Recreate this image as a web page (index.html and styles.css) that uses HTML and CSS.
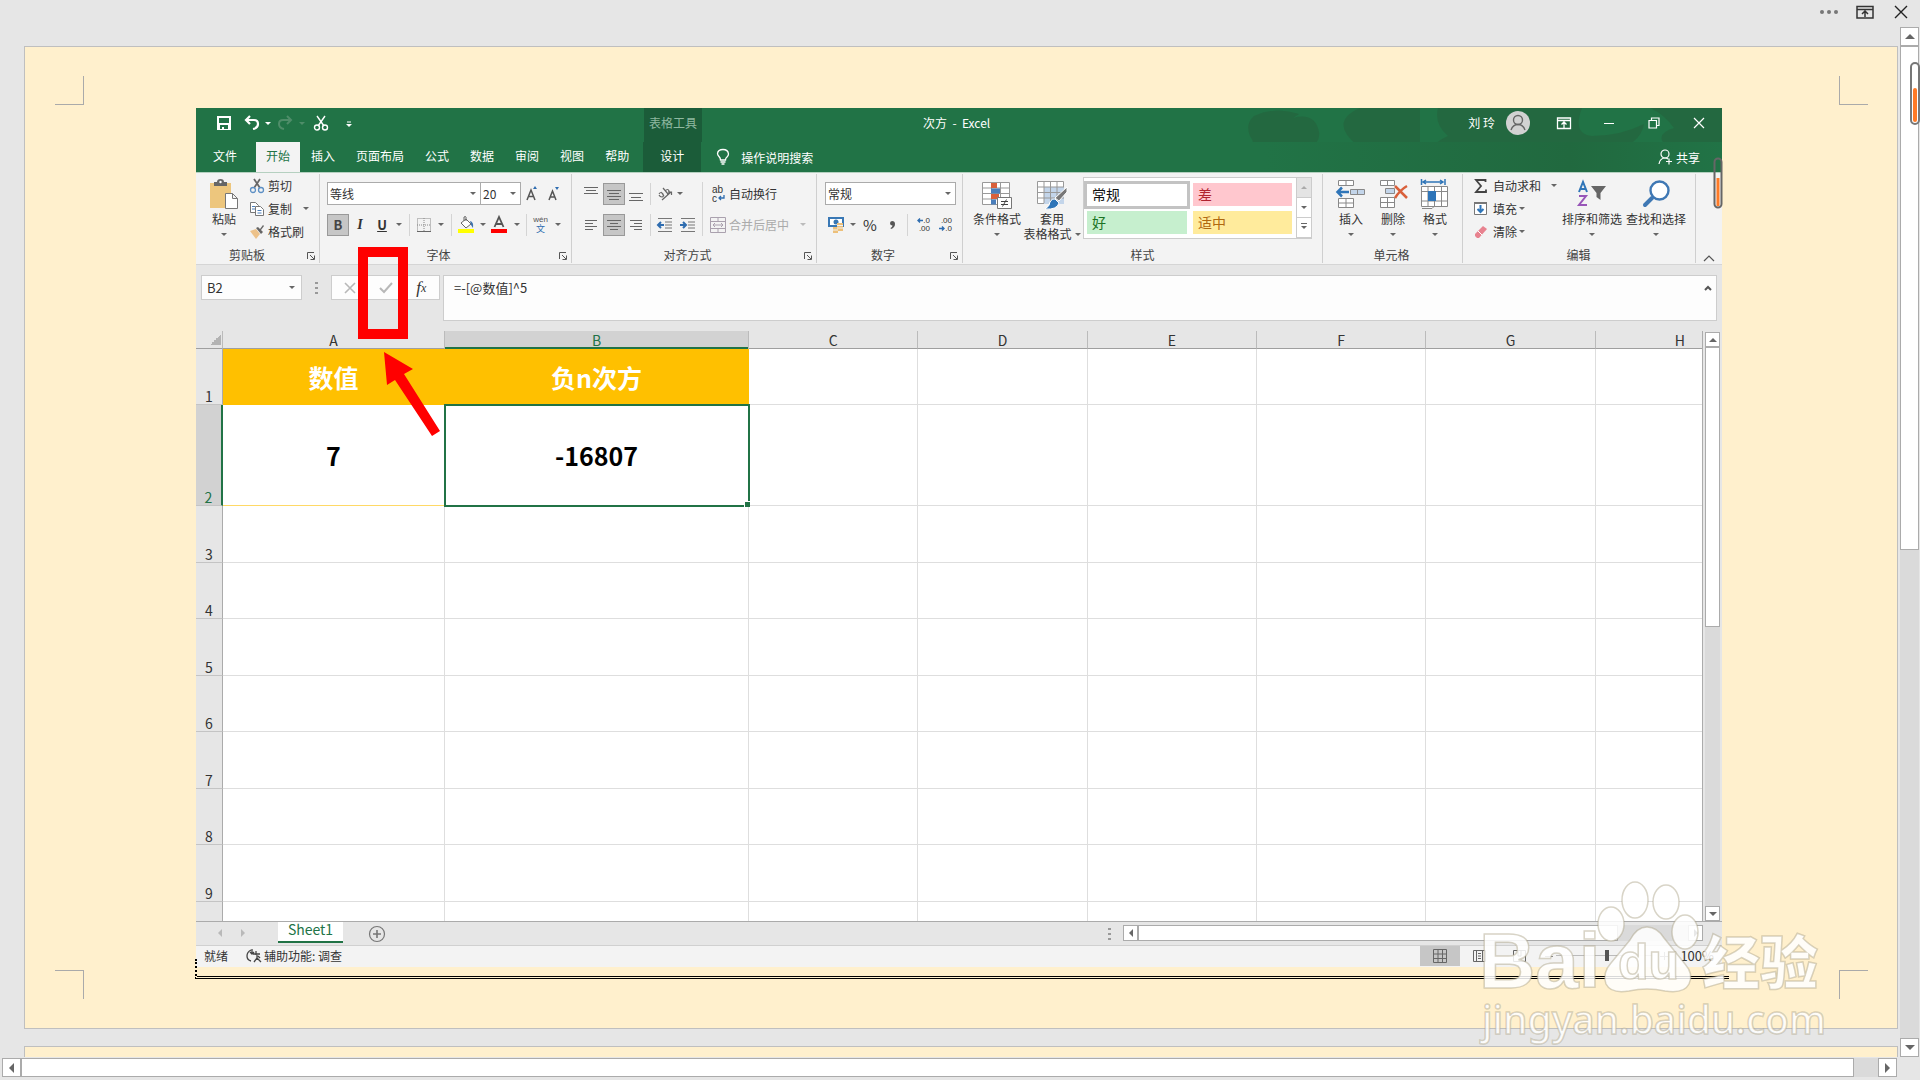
FILE: index.html
```html
<!DOCTYPE html>
<html lang="zh-CN">
<head>
<meta charset="utf-8">
<title>次方 - Excel</title>
<link rel="stylesheet" href="styles.css">
</head>
<body>
<div class="viewer">
  <header class="viewer-bar">
    <button aria-label="更多"><svg width="20" height="20"><g fill="#777"><circle cx="3" cy="10" r="2"/><circle cx="10" cy="10" r="2"/><circle cx="17" cy="10" r="2"/></g></svg></button>
    <button aria-label="功能区显示选项"><svg width="20" height="20" fill="none" stroke="#333" stroke-width="1.5"><path d="M2 4.500h16v11.500H2zM2 7.500h16M10 15V9M7 12l3-3 3 3"/></svg></button>
    <button aria-label="关闭"><svg width="20" height="20" fill="none" stroke="#222" stroke-width="1.4"><path d="M4 4l12 12M16 4L4 16"/></svg></button>
  </header>
  <main class="viewport">
    <section class="sheet-page">
      <span class="crop tl"></span><span class="crop tr"></span><span class="crop bl"></span><span class="crop br"></span>
      <div class="excel">
        <div class="titlebar">
          <svg class="clouds" width="480" height="64" viewBox="0 0 480 64" fill="#24653f" fill-opacity=".8"><path d="M12 8Q34-2 57 6l-6 4q22-6 26 14 2 14-18 17 24 1 36-5-24 14-52 10-24-5-39 4Q16 38 8 28q-5-12 4-20zM118 0h60v38q4 8 0 14-20-8-40-4-34 6-46-8 14 4 24-2-30-24 2-38zM196 0h144q-10 26 10 28 28 0 52-12-4 22-36 28-50 4-86-2-40-8-64 4-12 4-30 2 2-12 20-20-14-12-10-28zM408 0h72v52q-16-4-22-12-22 8-34-2-12-12 8-18-10-14-24-20z"/></svg>
          <div class="quick">
            <button aria-label="保存"><svg width="16" height="16"><path fill="#fff" fill-rule="evenodd" d="M1 1h14v14H1zM3 3v5h10V3zM4 10v4h2v-2h2v2h4v-4z"/></svg></button>
            <button aria-label="撤消"><svg width="16" height="16" fill="none" stroke="#fff" stroke-width="2.200"><path d="M6 1L2 5l4 4M2.500 5H10q4 0 4 4t-5 5"/></svg></button>
            <i class="ar light"></i>
            <button aria-label="恢复"><svg width="16" height="16" fill="none" stroke="#4f8d69" stroke-width="2"><path d="M10 1l4 4-4 4M13.500 5H6Q2 5 2 9t5 5"/></svg></button>
            <i class="ar dim"></i>
            <button aria-label="剪切"><svg width="16" height="16" fill="none" stroke="#fff" stroke-width="1.4"><path d="M4 1l7 10M12 1L5 11"/><circle cx="4" cy="12.500" r="2.500"/><circle cx="12" cy="12.500" r="2.500"/></svg></button>
            <button aria-label="自定义快速访问工具栏"><svg width="6" height="8"><path d="M1 3h4" stroke="#fff"/><path fill="#fff" d="M0 5h6L3 8z"/></svg></button>
          </div>
          <span class="context-title">表格工具</span>
          <span class="doc-title">次方&nbsp; -&nbsp; Excel</span>
          <div class="window-tools">
            <span class="user">刘 玲</span>
            <svg class="avatar" width="24" height="24"><circle cx="12" cy="12" r="12" fill="#d2d2d2"/><g fill="none" stroke="#666" stroke-width="1.400"><circle cx="12" cy="9" r="4.500"/><path d="M5 19q2-5.500 7-5.500t7 5.500"/></g></svg>
            <button aria-label="功能区"><svg width="16" height="14" fill="none" stroke="#fff" stroke-width="1.300"><path d="M1.500 2h13v10.500h-13zM1.500 4.500h13M8 12V6.500M5.500 8.500L8 6l2.500 2.500"/></svg></button>
            <button aria-label="最小化"><svg width="16" height="14"><path d="M3 7.500h10" stroke="#fff"/></svg></button>
            <button aria-label="还原"><svg width="16" height="14" fill="none" stroke="#fff" stroke-width="1.200"><path d="M3 4.500h7.500V12H3zM5.500 4.500V2H13v7.500h-2.500"/></svg></button>
            <button aria-label="关闭窗口"><svg width="16" height="14" fill="none" stroke="#fff" stroke-width="1.200"><path d="M3 2l10 10M13 2L3 12"/></svg></button>
          </div>
        </div>
        <nav class="tabs">
          <a href="#file" class="file">文件</a><a href="#home" class="active">开始</a><a href="#insert">插入</a><a href="#layout">页面布局</a><a href="#formula">公式</a><a href="#data">数据</a><a href="#review">审阅</a><a href="#view">视图</a><a href="#help">帮助</a><a href="#design" class="context">设计</a>
          <button class="tell"><svg width="14" height="18" fill="none" stroke="#fff" stroke-width="1.300"><path d="M4.500 12q0-2-1.500-3.500Q1.500 7 1.500 5.500 2 1.500 7 1.500t5.500 4.500q0 1.500-1.500 3Q9.500 10 9.500 12zM4.500 14h5M5.500 16h3"/></svg>操作说明搜索</button>
          <button class="share"><svg width="15" height="16" fill="none" stroke="#fff" stroke-width="1.200"><circle cx="7" cy="5" r="4"/><path d="M1 15q1-6 6-6 2 0 3 1M8 12.500h6M11 9.500v6"/></svg>共享</button>
        </nav>

        <div class="ribbon">
          <section class="group clipboard">
            <div class="clip-body">
              <button class="big"><svg width="30" height="32"><path fill="#edc67d" d="M1 3h21v25H1z"/><path fill="#666" d="M5 2h3q0-3 3.500-3T15 2h3v4H5z"/><circle cx="11.500" cy="2" r="1.200" fill="#fff"/><path fill="#fff" stroke="#777" d="M16.500 13.500h7l5 5v10h-12zM23.500 13.500v5h5"/></svg><span>粘贴</span><i class="ar"></i></button>
              <div class="stack">
                <button><svg width="16" height="16" fill="none"><path d="M5 1l6 9M11 1L5 10" stroke="#666" stroke-width="1.800"/><g stroke="#5c8fc4" stroke-width="1.300"><circle cx="4" cy="12" r="2.500"/><circle cx="12" cy="12" r="2.500"/></g></svg>剪切</button>
                <button><svg width="16" height="16" fill="#fff" stroke="#777"><path d="M1.500 1.500h5l3 3v7h-8z"/><path d="M6.500 5.500h5l3 3v6h-8z"/><path stroke="#4a7ebb" d="M3 5.500h3M3 8h3M8.500 9.500h4M8.500 12h4"/></svg>复制<i class="ar"></i></button>
                <button><svg width="16" height="16"><path fill="#edc28a" d="M1 7l6-2 4 5-4 5z"/><path fill="#666" d="M7 4l2-1 2 2 3-4 1 1-3 4 2 2-2 2z"/></svg>格式刷</button>
              </div>
            </div>
            <footer class="launchable">剪贴板<svg class="launch" width="8" height="8"><path d="M.5 7V.5H7M3 3l4 4M7.500 3.500v4h-4" fill="none" stroke="#555"/></svg></footer>
          </section>

          <section class="group font">
            <div class="row r1">
              <span class="combo"><select aria-label="字体"><option>等线</option></select></span>
              <span class="combo"><select aria-label="字号"><option>20</option></select></span>
              <button aria-label="增大字号"><svg width="14" height="16"><path d="M2 14L6 4l4 10M3.500 10.500h5" fill="none" stroke="#555" stroke-width="1.500"/><path fill="#2f6db0" d="M8 3l2-3 2 3z"/></svg></button>
              <button aria-label="减小字号"><svg width="14" height="16"><path d="M3 14L6.500 5 10 14M4.500 11h4" fill="none" stroke="#555" stroke-width="1.500"/><path fill="#2f6db0" d="M9 1h4l-2 3z"/></svg></button>
            </div>
            <div class="row r2">
              <button class="on"><b>B</b></button><button class="ital">I</button><button class="under">U</button><i class="ar"></i><i class="sep"></i>
              <button aria-label="边框"><svg width="14" height="14" fill="none" stroke="#888" stroke-dasharray="1 1"><path d="M.5.500h13v13H.5zM7 0v13M0 7h14"/><path stroke="#666" stroke-dasharray="none" d="M0 13.500h14"/></svg></button><i class="ar"></i><i class="sep"></i>
              <button aria-label="填充颜色"><svg width="16" height="17"><path fill="#fff" stroke="#666" d="M8 3l5 5-5 4-5-5z"/><path fill="none" stroke="#666" d="M6 5V1q2-1 2 0v4"/><path fill="#3f73ae" d="M12 5q4 1 3 7l-2-3z"/><path fill="#ff0" d="M0 13h16v4H0z"/></svg></button><i class="ar"></i>
              <button aria-label="字体颜色"><svg width="16" height="17"><path d="M3.500 11L8 1l4.500 10M5 8h6" fill="none" stroke="#555" stroke-width="1.800"/><path fill="#f00" d="M0 13h16v4H0z"/></svg></button><i class="ar"></i><i class="sep"></i>
              <button class="pinyin"><small>wén</small><span>文</span></button><i class="ar"></i>
            </div>
            <footer class="launchable">字体<svg class="launch" width="8" height="8"><path d="M.5 7V.5H7M3 3l4 4M7.500 3.500v4h-4" fill="none" stroke="#555"/></svg></footer>
          </section>

          <section class="group align">
            <div class="align-body">
              <div class="align-left">
                <div class="row r1">
                  <button aria-label="顶端对齐"><svg width="14" height="16" stroke="#666"><path d="M0 1.500h14M2 4.500h10M0 7.500h14"/></svg></button>
                  <button class="on" aria-label="垂直居中"><svg width="14" height="16" stroke="#666"><path d="M0 4.500h14M2 7.500h10M0 10.500h14M2 13.500h10"/></svg></button>
                  <button aria-label="底端对齐"><svg width="14" height="16" stroke="#666"><path d="M0 7.500h14M2 11.500h10M0 14.500h14"/></svg></button><i class="sep"></i>
                  <button aria-label="方向"><svg width="16" height="16" fill="none" stroke="#666" stroke-width="1.200"><path d="M2 8q2-3 4 0 1 3-1 3t-3-2M4 6l3 4M6 2l5 6M8 5q3-3 4 0t-2 3M5 14L14 6M11 6h3.500v3"/></svg></button><i class="ar"></i>
                </div>
                <div class="row r2">
                  <button aria-label="左对齐"><svg width="12" height="12" stroke="#666"><path d="M0 1.500h12M0 4.500h8M0 7.500h12M0 10.500h8"/></svg></button>
                  <button class="on" aria-label="居中"><svg width="14" height="12" stroke="#666"><path d="M0 1.500h14M3 4.500h8M0 7.500h14M3 10.500h8"/></svg></button>
                  <button aria-label="右对齐"><svg width="12" height="12" stroke="#666"><path d="M0 1.500h12M4 4.500h8M0 7.500h12M4 10.500h8"/></svg></button><i class="sep"></i>
                  <button aria-label="减少缩进"><svg width="16" height="14" fill="none" stroke="#777"><path d="M1 .500h14M8 4h7M8 7h7M8 10h7M1 13.500h14"/><path stroke="#2f6db0" stroke-width="2" d="M7 7H1.500M4 4L1 7l3 3"/></svg></button>
                  <button aria-label="增加缩进"><svg width="16" height="14" fill="none" stroke="#777"><path d="M1 .500h14M8 4h7M8 7h7M8 10h7M1 13.500h14"/><path stroke="#2f6db0" stroke-width="2" d="M0 7h5.500M3 4l3 3-3 3"/></svg></button>
                </div>
              </div>
              <i class="sep tall"></i>
              <div class="align-right">
                <button class="wrap"><span class="abc"><span>ab</span><span>c<svg width="7" height="6"><path d="M6 0v3H1M3 1L1 3l2 2" fill="none" stroke="#2f6db0" stroke-width="1.300"/></svg></span></span>自动换行</button>
                <button class="wrap off"><svg width="16" height="16" fill="none" stroke="#aaa1ae"><path d="M.5.500h15v15H.5zM0 4.500h16M0 11.500h16M8 0v4M8 12v4M3 8h10M5 6L3 8l2 2M11 6l2 2-2 2"/></svg>合并后居中<i class="ar"></i></button>
              </div>
            </div>
            <footer class="launchable">对齐方式<svg class="launch" width="8" height="8"><path d="M.5 7V.5H7M3 3l4 4M7.500 3.500v4h-4" fill="none" stroke="#555"/></svg></footer>
          </section>

          <section class="group number">
            <div class="row r1"><span class="combo"><select aria-label="数字格式"><option>常规</option></select></span></div>
            <div class="row r2">
              <button aria-label="会计数字格式"><svg width="16" height="16"><path fill="#3978b5" d="M0 0h16v10H0z"/><path fill="#fff" d="M2 2h12v6H2z"/><circle cx="8" cy="5" r="2.500" fill="#3978b5"/><path fill="#edc07a" d="M9 6h6v8H9zM5 10h5v6H5z"/><path stroke="#f3f3f3" d="M9 8.500h6M9 11h6M5 13h5"/></svg></button><i class="ar"></i>
              <button class="pct">%</button><button aria-label="千位分隔样式"><svg width="6" height="8"><path fill="#555" d="M3 0q3 0 3 3 0 3.500-4 5l-.5-1Q3.500 6 3.500 4.500 1 4.500 1 2.200 1 .2 3 0z"/></svg></button><i class="sep"></i>
              <button class="dec"><span><svg width="6" height="5"><path d="M6 2.500H1M3 .5l-2 2 2 2" fill="none" stroke="#2f6db0" stroke-width="1.400"/></svg>.0</span><span>.00</span></button><button class="dec"><span>.00</span><span><svg width="6" height="5"><path d="M0 2.500h5M3 .5l2 2-2 2" fill="none" stroke="#2f6db0" stroke-width="1.400"/></svg>.0</span></button>
            </div>
            <footer class="launchable">数字<svg class="launch" width="8" height="8"><path d="M.5 7V.5H7M3 3l4 4M7.500 3.500v4h-4" fill="none" stroke="#555"/></svg></footer>
          </section>

          <section class="group styles">
            <div class="styles-body">
              <button class="big"><svg width="30" height="32" fill="#fff" stroke="#999"><path d="M.5 2.500h27v22H.5zM0 8h28M0 13.500h28M0 19h28M9.500 2v22M18.500 2v22"/><g stroke="none"><path fill="#d9603b" d="M9 3h6v5H9zM9 14h8v5H9z"/><path fill="#4a7ebb" d="M9 8.500h9v5H9zM9 19.500h5v5H9z"/></g><path stroke="#777" d="M15.500 17.500h14v11h-14z"/><path stroke="#444" d="M19 21.500h7M19 24.500h7M24.500 19.500l-4 7"/></svg><span>条件格式</span><i class="ar"></i></button>
              <button class="big"><svg width="30" height="32" fill="#fff" stroke="#999"><path d="M.5 1.500h26v22H.5z"/><path fill="#c3d5ea" stroke="none" d="M7 7h20v17H7z"/><path fill="none" d="M0 7h27M0 12.500h27M0 18h27M7 1v22M13.500 1v22M20 1v22"/><path fill="#777" stroke="#fff" d="M30 7v5L22 21l-4-3z"/><path fill="#2f75b8" stroke="#fff" d="M18 19l4 4q-2 7-14 6 5-3 5-7 2-4 5-3z"/></svg><span>套用</span><span class="inline">表格格式<i class="ar"></i></span></button>
              <div class="gallery">
                <button class="normal">常规</button><button class="bad">差</button><button class="good">好</button><button class="neutral">适中</button>
                <div class="gscroll"><button aria-label="上一行"><i class="ar up"></i></button><button aria-label="下一行"><i class="ar"></i></button><button aria-label="其他样式"><i class="ar more"></i></button></div>
              </div>
            </div>
            <footer>样式</footer>
          </section>

          <section class="group cells">
            <div class="thirds">
              <button class="big"><svg width="30" height="32" fill="#fff" stroke="#888"><path d="M2.500.500h15v5h-15zM10 0v5M2.500 18.500h15v9h-15zM10 18v9M2 23h15"/><path fill="#c3d5ea" d="M14.500 9.500h14v5h-14zM21.500 9v6"/><path stroke="#2f75b8" stroke-width="2.500" fill="none" d="M13 12H2M6 7.500L1.500 12 6 16.500"/></svg><span>插入</span><i class="ar"></i></button>
              <button class="big"><svg width="30" height="32" fill="#fff" stroke="#888"><path d="M2.500.500h14v5h-14zM9.500 0v5M2.500 17.500h14v10h-14zM9.500 17v10M2 22.500h14"/><path fill="#c3d5ea" d="M7.500 8.500h9v5h-9z"/><path stroke="#d9603b" stroke-width="2.500" fill="none" d="M17 6q5 5 12 12M29 6q-7 4-12 12"/></svg><span>删除</span><i class="ar"></i></button>
              <button class="big"><svg width="30" height="32" fill="#fff" stroke="#888"><path d="M1.500 6.500h26v20h-26zM1 11.500h27M1 21h27M8 6v20M14.500 6v20M21.500 6v20M2 28.500h10l2-2"/><path stroke="none" fill="#2f75b8" d="M8 11h8v10H8z"/><path fill="none" stroke="#2f75b8" stroke-width="1.500" d="M3 2h20M6 0L3 2l3 2M20 0l3 2-3 2M1.500-1v6M25-1v6"/></svg><span>格式</span><i class="ar"></i></button>
            </div>
            <footer class="plain">单元格</footer>
          </section>

          <section class="group editing">
            <div class="edit-body">
              <div class="stack">
                <button><svg width="16" height="16"><path d="M12.500 4V2H3l5 6-5 6h10v-2.500" fill="none" stroke="#444" stroke-width="1.800"/></svg>自动求和<i class="ar far"></i></button>
                <button><svg width="16" height="16"><path fill="#fff" stroke="#777" d="M1.500 1.500h12v12h-12z"/><path fill="#777" d="M1 1h13v2H1z"/><path d="M7.500 4v7M4.500 8l3 3 3-3" fill="none" stroke="#2f75b8" stroke-width="2"/></svg>填充<i class="ar near"></i></button>
                <button><svg width="16" height="16"><path fill="#e8828f" d="M2 10l8-8 4 3-8 9H4l-2-2z"/><path stroke="#fff" d="M5 7l4 4"/></svg>清除<i class="ar near"></i></button>
              </div>
              <button class="big"><svg width="30" height="32" fill="none"><path stroke="#2f75b8" stroke-width="2" d="M2 12L6 2l4 10M3.500 9h5"/><path stroke="#9856b8" stroke-width="2" d="M2 16h7L2 25h8"/><path fill="#666" d="M14 6h15l-5.500 7v7l-4-3v-4z"/></svg><span>排序和筛选</span><i class="ar"></i></button>
              <button class="big"><svg width="30" height="32"><circle cx="18.500" cy="10.500" r="9" fill="#fff" stroke="#3f78b4" stroke-width="2.400"/><path stroke="#3f78b4" stroke-width="4" stroke-linecap="round" d="M11 18l-7 7"/></svg><span>查找和选择</span><i class="ar"></i></button>
            </div>
            <footer class="plain">编辑</footer>
          </section>
          <button class="collapse" aria-label="折叠功能区"><svg width="12" height="8"><path d="M1 7l5-5 5 5" fill="none" stroke="#555" stroke-width="1.200"/></svg></button>
        </div>

        <div class="formula-bar">
          <div class="namebox"><input aria-label="名称框" value="B2"><i class="ar"></i></div>
          <i class="dots"></i>
          <div class="fx">
            <button aria-label="取消"><svg width="12" height="12"><path d="M1 1l10 10M11 1L1 11" stroke="#b8b8b8" stroke-width="1.600"/></svg></button>
            <button aria-label="输入"><svg width="14" height="12"><path d="M1 6l4 4 8-9" fill="none" stroke="#b8b8b8" stroke-width="2"/></svg></button>
            <button class="fn">f<sub>x</sub></button>
          </div>
          <div class="formula"><input aria-label="编辑栏" value="=-[@数值]^5"><svg width="8" height="6"><path d="M1 5l3-3 3 3" fill="none" stroke="#555" stroke-width="2"/></svg></div>
        </div>

        <div class="work">
          <div class="grid-wrap">
            <table class="grid">
              <colgroup><col class="c-head"><col class="c-a"><col class="c-b"><col><col><col><col><col><col></colgroup>
              <thead><tr><th class="corner"></th><th>A</th><th class="sel">B</th><th>C</th><th>D</th><th>E</th><th>F</th><th>G</th><th>H</th></tr></thead>
              <tbody>
                <tr><th>1</th><td class="fill">数值</td><td class="fill">负n次方</td><td></td><td></td><td></td><td></td><td></td><td></td></tr>
                <tr class="tall"><th class="sel">2</th><td class="num">7</td><td class="num current">-16807</td><td></td><td></td><td></td><td></td><td></td><td></td></tr>
                <tr><th>3</th><td></td><td></td><td></td><td></td><td></td><td></td><td></td><td></td></tr>
                <tr><th>4</th><td></td><td></td><td></td><td></td><td></td><td></td><td></td><td></td></tr>
                <tr><th>5</th><td></td><td></td><td></td><td></td><td></td><td></td><td></td><td></td></tr>
                <tr><th>6</th><td></td><td></td><td></td><td></td><td></td><td></td><td></td><td></td></tr>
                <tr><th>7</th><td></td><td></td><td></td><td></td><td></td><td></td><td></td><td></td></tr>
                <tr><th>8</th><td></td><td></td><td></td><td></td><td></td><td></td><td></td><td></td></tr>
                <tr><th>9</th><td></td><td></td><td></td><td></td><td></td><td></td><td></td><td></td></tr>
                <tr class="last"><th></th><td></td><td></td><td></td><td></td><td></td><td></td><td></td><td></td></tr>
              </tbody>
            </table>
          </div>
          <div class="vscroll small"><button aria-label="向上滚动"><i class="tri up"></i></button><span class="thumb"></span><span class="track"></span><button aria-label="向下滚动"><i class="tri down"></i></button></div>
        </div>

        <div class="sheetbar">
          <div class="sheet-nav"><i class="tri left"></i><i class="tri right"></i></div>
          <a href="#sheet1" class="sheet-tab">Sheet1</a>
          <button class="add" aria-label="新工作表"><svg width="18" height="18" fill="none" stroke="#777" stroke-width="1.200"><circle cx="9" cy="9" r="7.500"/><path d="M9 5v8M5 9h8" stroke-width="1.600"/></svg></button>
          <i class="dots"></i>
          <div class="hscroll small"><button aria-label="向左滚动"><i class="tri left"></i></button><span class="thumb"></span><span class="track"></span><button aria-label="向右滚动"><i class="tri right"></i></button></div>
        </div>
        <div class="status">
          <span>就绪</span>
          <span class="access"><svg width="16" height="16" fill="none" stroke="#444" stroke-width="1.300"><path d="M5 2q-4 2-4 6t4 5M6 1v5M4 4l2 2 2-2M7 6h7M10 3v4M8 14l3-4v-3M15 14l-4-4M12 8l2 2"/></svg>辅助功能: 调查</span>
          <div class="views">
            <button class="on" aria-label="普通"><svg width="14" height="14" fill="none" stroke="#666"><path d="M.5.500h13v13H.5zM5 0v14M9.500 0v14M0 5h14M0 9.500h14"/></svg></button>
            <button aria-label="页面布局"><svg width="14" height="14" fill="none" stroke="#666"><path d="M.5 1.500h12v11H.5zM3.500 1v11M9.500 1v11M5 4.500h3M5 7h3M5 9.500h3"/></svg></button>
            <button aria-label="分页预览"><svg width="14" height="14" fill="none" stroke="#666"><path d="M.5 1.500h12v11H.5zM5 1v6h3V1"/></svg></button>
          </div>
          <div class="zoom-bar">
            <svg width="8" height="8"><path d="M0 4.500h8" stroke="#888"/></svg>
            <input class="zoom" type="range" aria-label="缩放">
            <svg width="8" height="8"><path d="M0 4.500h8M4.500 0v8" stroke="#888"/></svg>
          </div>
          <span class="percent">100%</span>
        </div>
        <span class="frame-line"></span>
        <svg class="excel-pill" width="10" height="52"><rect x="1.500" y="1.500" width="7" height="49" rx="3.500" fill="none" stroke="#666" stroke-width="2"/><path stroke="#ff7a26" stroke-width="3" d="M5 21v28"/></svg>
        <svg class="callout" width="84" height="192" viewBox="0 0 84 192"><path fill="none" stroke="#f00" stroke-width="10" d="M5 5h40v82H5z"/><path fill="#f00" d="M26 105l29 17-9 5 36 57-8 5-37-56-8 5z"/></svg>
      </div>
      <svg class="watermark" width="360" height="180" viewBox="0 0 360 180">
        <g fill="#fff" fill-opacity=".85" stroke="#a9a083" stroke-opacity=".45" stroke-width="1.500">
          <text x="9" y="109" class="wm-bai">Bai</text>
          <ellipse cx="141" cy="45" rx="13" ry="17"/><ellipse cx="165" cy="21" rx="13" ry="18"/><ellipse cx="196" cy="23" rx="13" ry="17"/><ellipse cx="215" cy="53" rx="13" ry="17"/>
          <path d="M177 48q10 0 17 11l21 26q9 10 4 20-5 10-24 7-18-4-36 0-18 3-23-7-4-11 5-21l19-23q7-13 17-13z"/>
          <text x="148" y="100" class="wm-du">du</text>
          <text x="232" y="105" class="wm-cn">经验</text>
          <text x="12" y="155" class="wm-url">jingyan.baidu.com</text>
        </g>
      </svg>
    </section>
    <section class="next-page"></section>
  </main>
  <div class="vscroll outer"><button aria-label="上滚"><i class="tri up"></i></button><span class="thumb"></span><span class="track"></span><button aria-label="下滚"><i class="tri down"></i></button>
    <svg class="outer-pill" width="12" height="66"><rect x="2" y="2" width="8" height="61" rx="4" fill="none" stroke="#777" stroke-width="2"/><path stroke="#ff7a26" stroke-width="4" stroke-linecap="round" d="M6 29v30"/></svg>
  </div>
  <div class="hscroll outer"><button aria-label="左滚"><i class="tri left"></i></button><span class="thumb"></span><span class="track"></span><button aria-label="右滚"><i class="tri right"></i></button></div>
</div>
</body>
</html>
```
FILE: styles.css
```css
* { box-sizing: border-box; }
body {
  margin: 0 8px 8px 0;
  background: #fff;
  font: 12px/16px "Noto Sans CJK SC", sans-serif;
  color: #333;
}
button, input, select { font: inherit; color: inherit; border: 0; padding: 0; margin: 0; background: none; }
a { color: inherit; text-decoration: none; }
svg { flex: none; display: block; overflow: visible; }

.viewer {
  display: grid;
  grid-template: 27px minmax(0, 1fr) 23px / minmax(0, 1fr) 20px;
  height: calc(100vh - 8px);
  background: #e6e6e6;
}
.viewer-bar {
  grid-column: 1 / 3;
  display: flex;
  justify-content: flex-end;
  align-items: center;
  gap: 16px;
  padding: 0 9px 3px 0;
}
.viewport { padding: 19px 2px 0 24px; overflow: hidden; }
.sheet-page {
  position: relative;
  padding: 61px 175px 61px 171px;
  border: 1px solid #bfbfbf;
  background: #fff0cd;
}
.next-page { height: 40px; margin-top: 17px; border: 1px solid #bfbfbf; background: #fff0cd; }

.crop { position: absolute; width: 29px; height: 29px; border: 0 solid #aaa; }
.tl { left: 30px; top: 29px; border-width: 0 1px 1px 0; }
.tr { right: 29px; top: 29px; border-width: 0 0 1px 1px; }
.bl { left: 30px; bottom: 29px; border-width: 1px 1px 0 0; }
.br { right: 29px; bottom: 29px; border-width: 1px 0 0 1px; }

/* small drop-down arrows and scroll triangles */
.ar { flex: none; width: 0; height: 0; border: 3px solid transparent; border-top-color: #666; border-bottom: 0; }
.ar.light { border-top-color: #fff; }
.ar.dim { border-top-color: #4f8d69; }
.ar.up { border-top: 0; border-bottom: 3px solid #aaa; }
.ar.more { position: relative; }
.ar.more::before { content: ""; position: absolute; left: -3px; top: -6px; width: 6px; height: 1px; background: #666; }
.tri { flex: none; width: 0; height: 0; border: 4px solid transparent; }
.tri.up { border-top: 0; border-bottom-color: #666; }
.tri.down { border-bottom: 0; border-top-color: #666; }
.tri.left { border-left: 0; border-right-color: #666; }
.tri.right { border-right: 0; border-left-color: #666; }
.outer .tri { border-width: 5px; }
.outer .tri.up { border-top: 0; }
.outer .tri.down { border-bottom: 0; }
.outer .tri.left { border-left: 0; }
.outer .tri.right { border-right: 0; }

/* scroll bars */
.vscroll, .hscroll { display: flex; }
.vscroll { flex-direction: column; }
.vscroll button, .hscroll button { flex: none; display: flex; align-items: center; justify-content: center; border: 1px solid #ababab; background: #fff; }
.thumb { border: 1px solid #ababab; background: #fff; }
.track { flex: 1; background: #dadada; }
.vscroll.outer { position: relative; padding-right: 1px; }
.vscroll.outer button { height: 19px; }
.vscroll.outer .thumb { height: 504px; }
.outer-pill { position: absolute; right: -1px; top: 34px; }
.hscroll.outer { grid-column: 1 / 3; padding: 1px 23px 3px 2px; }
.hscroll.outer button { width: 19px; }
.hscroll.outer .thumb { flex: 1; }
.hscroll.outer .track { flex: 0 0 24px; }

/* Excel window */
.excel { position: relative; background: #e6e6e6; }
.titlebar {
  display: flex;
  align-items: center;
  position: relative;
  height: 34px;
  padding-bottom: 4px;
  background: #217346;
  color: #fff;
}
.clouds { position: absolute; right: 0; top: 0; }
.quick {
  flex: none;
  width: 448px;
  padding-left: 13px;
  display: grid;
  grid-template-columns: 30px 26px 6px 28px 6px 32px 24px;
  align-items: center;
  justify-items: center;
  justify-content: start;
}
.context-title { flex: none; width: 58px; height: 34px; margin-bottom: -4px; line-height: 30px; text-align: center; background: #1b5c39; color: #8fb8a0; }
.doc-title { flex: 1; padding-left: 221px; }
.window-tools { position: relative; display: flex; align-items: center; gap: 29px; padding-right: 15px; }
.window-tools .user { margin-right: -18px; }
.window-tools .avatar { margin-right: -3px; }

.tabs { display: flex; height: 30px; position: relative; background: linear-gradient(90deg, #217346 70%, #21693f 90%, #217346); color: #fff; line-height: 27px; }
.tabs a { padding: 0 10px 0 11px; }
.tabs .file { padding: 0 19px 0 17px; }
.tabs .active { background: #f3f3f3; color: #217346; padding: 0 10px; }
.tabs .context { margin-left: 4px; width: 58px; padding: 0; text-align: center; background: #1b5c39; }
.tabs button { display: flex; align-items: center; }
.tell { gap: 11px; margin-left: 15px; }
.share { gap: 3px; margin: 0 22px 0 auto; }

.ribbon { display: flex; height: 93px; padding-top: 1px; background: #f3f3f3; border-bottom: 1px solid #d5d5d5; border-top: 1px solid #b5d0c0; }
.group { position: relative; flex: none; display: flex; flex-direction: column; height: 89px; padding-top: 8px; border-right: 1px solid #cfcfcf; }
.group footer { margin-top: auto; display: flex; justify-content: center; line-height: 16px; color: #444; }
.group .launchable { padding-right: 21px; }
.group .plain { padding-right: 9px; }
.launch { position: absolute; right: 4px; bottom: 3px; }
.clipboard { width: 124px; }
.font { width: 252px; padding-left: 7px; }
.align { width: 245px; padding-left: 8px; }
.number { width: 146px; padding-left: 8px; }
.styles { width: 360px; }
.cells { width: 140px; padding-left: 7px; }
.editing { width: 233px; padding-left: 8px; }
.collapse { flex: 1; display: flex; justify-content: center; align-items: flex-end; padding: 0 1px 2px 0; }

.row { display: grid; align-items: center; justify-items: center; height: 23px; }
.row.r2 { margin-top: 8px; }
.row button { width: 22px; height: 22px; display: flex; align-items: center; justify-content: center; }
.on { background: #c6c6c6; }
.row .on { border: 1px solid #999; }
.sep { width: 1px; height: 22px; background: #d4d4d4; }
.sep.tall { height: 54px; margin: 0 3px 0 2px; }
.font .r1 { grid-template-columns: 154px 40px 22px 20px; }
.font .r2 { grid-template-columns: 22px 22px 22px 12px 9px 20px 14px 7px 22px 11px 22px 13px 6px 23px 12px; }
.align .r1 { grid-template-columns: 22px 23px 22px 7px 22px 8px; }
.align .r2 { grid-template-columns: 22px 23px 22px 7px 22px 24px; }
.number .r1 { grid-template-columns: 131px; }
.number .r2 { grid-template-columns: 22px 12px 22px 22px 9px 22px 22px; }
.combo { position: relative; width: 100%; height: 23px; }
.combo select { width: 100%; height: 23px; padding-left: 2px; appearance: none; border: 1px solid #ababab; background: #fff; }
.font .combo + .combo select { border-left: 0; }
.combo::after { content: ""; position: absolute; right: 5px; top: 10px; border: 3px solid transparent; border-top-color: #666; border-bottom: 0; }
.row .ital { font: italic bold 14px/16px "Liberation Serif", serif; }
.row .under { font-weight: 700; font-size: 13px; text-decoration: underline; }
.row .on b { font-size: 13px; color: #444; }
.row .pinyin { flex-direction: column; font-size: 9px; line-height: 10px; color: #2f6db0; }
.pinyin small { font: 8px/8px "Liberation Sans", sans-serif; color: #555; }
.row .pct { font-size: 15px; }
.row .dec { flex-direction: column; align-items: flex-end; justify-content: center; font: 8px/8px "Liberation Sans", sans-serif; padding-right: 4px; }
.dec span { display: flex; align-items: center; }

.clip-body { display: flex; }
.clip-body .big { width: 56px; margin-right: -3px; }
.big { display: flex; flex-direction: column; align-items: center; line-height: 15px; color: #333; height: 62px; margin-top: -2px; white-space: nowrap; }
.big svg { height: 31px; }
.big .ar { margin-top: 7px; }
.big .inline { display: flex; align-items: center; gap: 3px; }
.big .inline .ar { margin-top: 2px; }
.stack { margin-top: -8px; }
.stack button { display: flex; align-items: center; height: 23px; gap: 3px; }
.clip-body .stack .ar { margin-left: 8px; }
.stack .far { margin-left: 6px; }
.edit-body .stack { flex: none; width: 89px; }
.edit-body .stack button { gap: 4px; padding-left: 2px; }
.stack .near { margin-left: -2px; }

.align-body { display: flex; }
.align-left { width: 120px; }
.align-right { display: grid; grid-template-rows: 23px 23px; gap: 8px; }
.wrap { display: flex; align-items: center; gap: 3px; padding-left: 4px; }
.abc { display: grid; width: 16px; font: 10px/9px "Liberation Sans", sans-serif; padding-left: 2px; }
.abc span { display: flex; align-items: center; gap: 1px; }
.off { color: #aaa; }
.off .ar { border-top-color: #bbb; margin-left: 8px; }

.styles-body { display: flex; margin-left: 9px; }
.styles-body .big { width: 50px; }
.styles-body .big + .big { width: 56px; margin-left: 2px; }
.gallery {
  display: grid;
  grid-template: 28px 26px / 106px 103px 15px;
  align-content: center;
  margin: -5px 0 0 3px;
  width: 229px;
  height: 62px;
  border: 1px solid #ccc;
  background: #fff;
  overflow: hidden;
}
.gallery > button { margin: 2px 3px; padding: 0 0 2px 5px; text-align: left; font: 14px/18px "Noto Sans CJK SC", sans-serif; }
.gallery > .normal { margin: 0; border: 3px solid #c3c3c3; color: #111; }
.gallery > .bad { background: #ffc7ce; color: #b02330; margin: 2px 1px 3px 3px; }
.gallery > .good { background: #c6efce; color: #1b7323; grid-row: 2; grid-column: 1; margin: 2px 3px 1px; }
.gallery > .neutral { background: #ffeb9c; color: #b0680f; margin: 2px 1px 1px 3px; }
.gscroll { grid-area: 1 / 3 / 3 / 4; display: grid; grid-template-rows: 20px 20px 20px; margin: -3px 0 -3px 3px; border-left: 1px solid #ccc; width: 15px; }
.gscroll button { display: grid; place-items: center; border-bottom: 1px solid #ccc; }
.gscroll button:first-child { background: #e4e4e4; }

.thirds { display: grid; grid-template-columns: 42px 42px 42px; }
.edit-body { display: flex; }
.edit-body .big { width: 64px; }

/* formula bar */
.formula-bar { display: flex; align-items: flex-start; padding: 10px 5px 10px; }
.namebox, .fx { display: flex; align-items: center; height: 25px; border: 1px solid #cdcdcd; background: #fdfdfd; }
.namebox { width: 101px; padding: 0 6px 0 5px; }
.namebox input { flex: 1; min-width: 0; font-size: 13px; }
.dots { width: 3px; height: 12px; background: repeating-linear-gradient(#999 0 2px, transparent 2px 5px); }
.formula-bar .dots { margin: 7px 13px 0 13px; }
.fx { width: 109px; }
.fx button { flex: 1; display: flex; justify-content: center; align-items: center; }
.fx .fn { font: italic 17px/18px "Liberation Serif", serif; }
.fn sub { font-size: 12px; vertical-align: -2px; }
.formula { flex: 1; display: flex; justify-content: space-between; height: 46px; margin-left: 3px; padding: 1px 4px 0 10px; border: 1px solid #cdcdcd; background: #fdfdfd; }
.formula input { flex: 1; height: 20px; font-size: 13px; }
.formula svg { margin-top: 8px; }

/* worksheet */
.work { display: flex; height: 591px; border-bottom: 1px solid #ababab; }
.grid-wrap { flex: 1; min-width: 0; overflow: hidden; border-right: 1px solid #ababab; }
.grid { table-layout: fixed; width: 1569px; border-collapse: separate; border-spacing: 0; background: #fff; }
.c-head { width: 27px; }
.c-a { width: 222px; }
.c-b { width: 304px; }
.grid th { padding: 0; background: #e6e6e6; font-weight: 400; font-size: 14px; line-height: 16px; }
.grid thead th { height: 18px; border-right: 1px solid #bbb; border-bottom: 1px solid #9f9f9f; }
.grid thead .sel { background: #d2d2d2; color: #217346; border-bottom: 0; box-shadow: inset 0 -2px #217346; }
.grid .corner { background: linear-gradient(135deg, #e6e6e6 50%, #b3b3b3 50%) no-repeat 14px 3px / 11px 11px #e6e6e6; }
.grid tbody th { height: 56px; vertical-align: bottom; border-right: 1px solid #ababab; border-bottom: 1px solid #c4c4c4; }
.grid tbody tr:nth-child(odd) th { height: 57px; }
.grid tbody tr:first-child th { height: 56px; }
.grid tbody tr.tall th { height: 101px; }
.grid tbody tr.last th { height: 22px; }
.grid tbody .sel { background: #d2d2d2; color: #217346; border-right: 2px solid #217346; }
.grid td { padding: 0; text-align: center; border: solid #dedede; border-width: 0 1px 1px 0; }
.grid .fill { border-color: #ffc000; background: #ffc000; color: #fff; font-size: 25px; line-height: 30px; font-weight: 700; }
.grid .num { border-bottom-color: #ffd966; font-size: 25px; line-height: 30px; font-weight: 700; color: #000; }
.grid .current { position: relative; outline: 2px solid #217346; outline-offset: -1px; }
.current::after { content: ""; position: absolute; right: -2px; bottom: -2px; width: 5px; height: 5px; background: #217346; border: solid #fff; border-width: 1px 0 0 1px; }
.vscroll.small { flex: none; width: 19px; padding: 1px 2px 0; }
.vscroll.small button { height: 15px; }
.vscroll.small .thumb { height: 280px; }

.sheetbar { display: flex; height: 23px; }
.sheet-nav { display: flex; align-items: center; gap: 19px; width: 82px; padding: 0 0 1px 22px; opacity: .35; }
.sheet-tab { width: 65px; height: 21px; text-align: center; font-size: 14px; line-height: 15px; color: #217346; background: #fff; border-bottom: 2px solid #217346; }
.add { margin-left: 25px; }
.sheetbar .dots { margin: 6px 12px 0 auto; }
.hscroll.small { flex: 0 1 580px; margin: 3px 19px 4px 0; }
.hscroll.small button { width: 15px; }
.hscroll.small .thumb { width: 480px; }

.status { display: flex; align-items: center; height: 22px; padding: 0 8px 2px; background: #f3f3f3; border-top: 1px solid #d0d0d0; }
.access { display: flex; align-items: center; gap: 2px; margin-left: 18px; }
.views { display: flex; margin-left: auto; height: 20px; }
.views button { width: 40px; display: grid; place-items: center; }
.zoom-bar { display: flex; align-items: center; gap: 3px; margin: 0 12px 0 5px; }
.zoom { appearance: none; width: 101px; height: 12px; background: linear-gradient(#bbb, #bbb) no-repeat center / 100% 1px; }
.zoom::-webkit-slider-thumb { appearance: none; width: 4px; height: 11px; background: #555; }
.percent { font-size: 13px; }

/* marks that lie over the picture */
.frame-line { position: absolute; left: -1px; right: -7px; bottom: -12px; height: 20px; border-left: 2px dotted #000; border-bottom: 3px double #000; }
.excel-pill { position: absolute; right: -1px; top: 49px; }
.callout { position: absolute; left: 162px; top: 139px; }
.watermark { position: absolute; right: 67px; bottom: -31px; }
.wm-bai { font: 700 78px "Liberation Sans", sans-serif; }
.wm-du { font: 700 50px "Liberation Sans", sans-serif; }
.wm-cn { font: 900 58px "Noto Sans CJK SC", sans-serif; }
.wm-url { font: 500 39px "Noto Sans", sans-serif; }
```
